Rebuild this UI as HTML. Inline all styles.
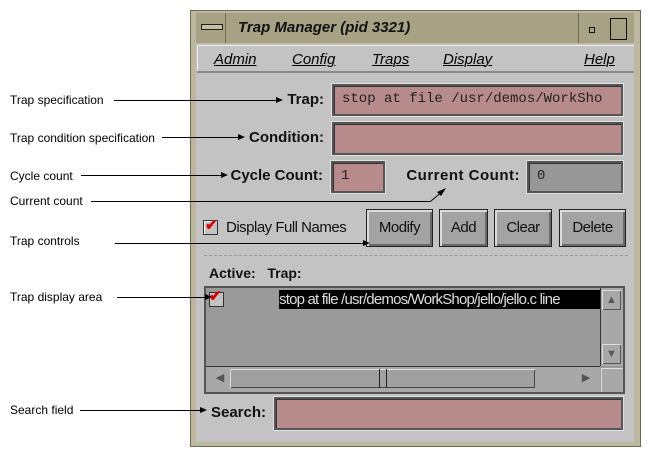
<!DOCTYPE html>
<html><head><style>
body{margin:0;width:651px;height:457px;background:#fff;position:relative;overflow:hidden;font-family:"Liberation Sans",sans-serif}
.a{position:absolute}
.lbl{font-size:12px;color:#000}
.ln{position:absolute;height:1px;background:#000;z-index:5}
.frame{left:190px;top:10px;width:451px;height:437px;background:#bdb89f;border:1px solid #6d6a58;box-sizing:border-box}
.win{left:196px;top:44px;width:438px;height:398px;background:#c3c3c3}
.title{left:196px;top:13px;width:438px;height:30px;background:#a7a283}
.field{position:absolute;background:#b78b8b;border:2px solid #555;box-shadow:inset 1px 1px 0 #333,0 0 0 1px #e0e0e0;box-sizing:border-box;font-family:"Liberation Mono",monospace;font-size:14px;color:#222;padding:5px 0 0 8px}
.b{font-weight:bold;font-size:15px;color:#111;text-align:right}
.btn{position:absolute;top:209px;height:38px;background:#a3a3a3;border:1px solid #222;box-shadow:inset 2px 2px 0 #dcdcdc,inset -2px -2px 0 #6a6a6a;box-sizing:border-box;font-size:15px;color:#111;text-align:center;line-height:36px;letter-spacing:-0.5px}
.menu{font-style:italic;font-size:15px;top:51px;text-decoration:underline;text-decoration-thickness:1px}
</style></head><body>
<div class="a lbl" style="left:10px;top:93px">Trap specification</div>
<div class="ln" style="left:114px;top:100px;width:162px"></div>
<div class="a lbl" style="left:10px;top:131px">Trap condition specification</div>
<div class="ln" style="left:162px;top:137px;width:76px"></div>
<div class="a lbl" style="left:10px;top:169px">Cycle count</div>
<div class="ln" style="left:81px;top:175px;width:140px"></div>
<div class="a lbl" style="left:10px;top:194px">Current count</div>
<div class="ln" style="left:91px;top:201px;width:340px"></div>
<div class="a lbl" style="left:10px;top:234px">Trap controls</div>
<div class="ln" style="left:115px;top:243px;width:248px"></div>
<div class="a lbl" style="left:10px;top:290px">Trap display area</div>
<div class="ln" style="left:117px;top:297px;width:88px"></div>
<div class="a lbl" style="left:10px;top:403px">Search field</div>
<div class="ln" style="left:80px;top:410px;width:120px"></div>

<div class="a frame"></div>
<div class="a title"></div>
<div class="a" style="left:201px;top:24px;width:20px;height:4px;border:1px solid #222;background:#c3bfa6"></div>
<div class="a" style="left:225px;top:13px;width:1px;height:30px;background:#6d6a58"></div>
<div class="a" style="left:238px;top:19px;font-size:15px;font-style:italic;font-weight:bold;color:#111">Trap Manager (pid 3321)</div>
<div class="a" style="left:578px;top:13px;width:1px;height:30px;background:#6d6a58"></div>
<div class="a" style="left:589px;top:27px;width:4px;height:4px;border:1px solid #111"></div>
<div class="a" style="left:610px;top:18px;width:15px;height:20px;border:1px solid #111"></div>
<div class="a win"></div>
<div class="a" style="left:197px;top:45px;width:437px;height:28px;background:#c3c3c3;border-bottom:2px solid #888;box-sizing:border-box;box-shadow:inset 1px 1px 0 #eee"></div>
<div class="a menu" style="left:214px">Admin</div>
<div class="a menu" style="left:292px">Config</div>
<div class="a menu" style="left:372px">Traps</div>
<div class="a menu" style="left:443px">Display</div>
<div class="a menu" style="left:584px">Help</div>

<div class="a b" style="left:200px;width:124px;top:91px">Trap:</div>
<svg class="a" style="left:0;top:0;z-index:5" width="651" height="457"><g fill="#000">
<polygon points="276,97 283,100 276,103"/><polygon points="238,134 245,137 238,140"/>
<polygon points="221,172 228,175 221,178"/><polygon points="363,240 370,243 363,246"/>
<polygon points="205,294 212,297 205,300"/><polygon points="200,407 207,410 200,413"/>
<polygon points="446,188 441,196 437,192"/></g>
<line x1="431" y1="201" x2="443" y2="191" stroke="#000"/></svg>
<div class="field" style="left:332px;top:84px;width:291px;height:32px">stop at file /usr/demos/WorkSho</div>
<div class="a b" style="left:200px;width:124px;top:129px">Condition:</div>
<div class="field" style="left:332px;top:122px;width:291px;height:33px"></div>
<div class="a b" style="left:200px;width:123px;top:167px">Cycle Count:</div>
<div class="field" style="left:331px;top:161px;width:54px;height:32px">1</div>
<div class="a b" style="left:390px;width:130px;top:167px;letter-spacing:0.5px">Current Count:</div>
<div class="field" style="left:527px;top:161px;width:96px;height:32px;background:#979797">0</div>

<div class="a" style="left:203px;top:220px;width:13px;height:13px;background:#c3c3c3;border:1px solid #333;box-shadow:inset 1px 1px 0 #fff"></div>
<div class="a" style="left:205px;top:216px;color:#d00;font-size:15px;font-weight:bold">✔</div>
<div class="a" style="left:226px;top:219px;font-size:15px;color:#111;letter-spacing:-0.5px">Display Full Names</div>
<div class="btn" style="left:366px;width:67px">Modify</div>
<div class="btn" style="left:439px;width:49px">Add</div>
<div class="btn" style="left:494px;width:58px">Clear</div>
<div class="btn" style="left:559px;width:67px">Delete</div>
<div class="a" style="left:204px;top:255px;width:424px;border-top:1px dashed #999"></div>
<div class="a" style="left:209px;top:265px;font-size:14px;font-weight:bold;color:#111">Active:&nbsp;&nbsp; Trap:</div>

<div class="a" style="left:204px;top:286px;width:421px;height:108px;background:#9a9a9a;border:2px solid #555;box-sizing:border-box"></div>
<div class="a" style="left:209px;top:292px;width:13px;height:13px;background:#c3c3c3;border:1px solid #333"></div>
<div class="a" style="left:209px;top:287px;color:#d00;font-size:15px;font-weight:bold">✔</div>
<div class="a" style="left:279px;top:290px;width:321px;height:19px;background:#000;color:#ddd;font-size:15px;line-height:19px;overflow:hidden;white-space:nowrap;letter-spacing:-0.8px">stop at file /usr/demos/WorkShop/jello/jello.c line</div>
<div class="a" style="left:600px;top:288px;width:23px;height:78px;background:#a8a8a8;border-left:1px solid #333;box-sizing:border-box"></div>
<div class="a" style="left:602px;top:290px;width:19px;height:20px;background:#a8a8a8;box-shadow:inset 1px 1px 0 #ddd,inset -1px -1px 0 #555;color:#555;font-size:11px;text-align:center;line-height:20px">▲</div>
<div class="a" style="left:602px;top:344px;width:19px;height:20px;background:#a8a8a8;box-shadow:inset 1px 1px 0 #ddd,inset -1px -1px 0 #555;color:#555;font-size:11px;text-align:center;line-height:20px">▼</div>
<div class="a" style="left:206px;top:366px;width:394px;height:26px;background:#a8a8a8;border-top:1px solid #333;box-sizing:border-box"></div>
<div class="a" style="left:230px;top:369px;width:305px;height:19px;background:#a0a0a0;box-shadow:inset 1px 1px 0 #ddd,inset -1px -1px 0 #444"></div>
<div class="a" style="left:379px;top:369px;width:6px;height:19px;border-left:1px solid #222;border-right:1px solid #222"></div>
<div class="a" style="left:210px;top:369px;width:20px;height:19px;color:#555;font-size:11px;line-height:19px;text-align:center">◀</div>
<div class="a" style="left:576px;top:369px;width:20px;height:19px;color:#555;font-size:11px;line-height:19px;text-align:center">▶</div>
<div class="a" style="left:601px;top:368px;width:22px;height:24px;background:#a8a8a8;box-shadow:inset 1px 1px 0 #ddd"></div>

<div class="a b" style="left:200px;width:66px;top:404px">Search:</div>
<div class="field" style="left:274px;top:397px;width:349px;height:33px"></div>
</body></html>
